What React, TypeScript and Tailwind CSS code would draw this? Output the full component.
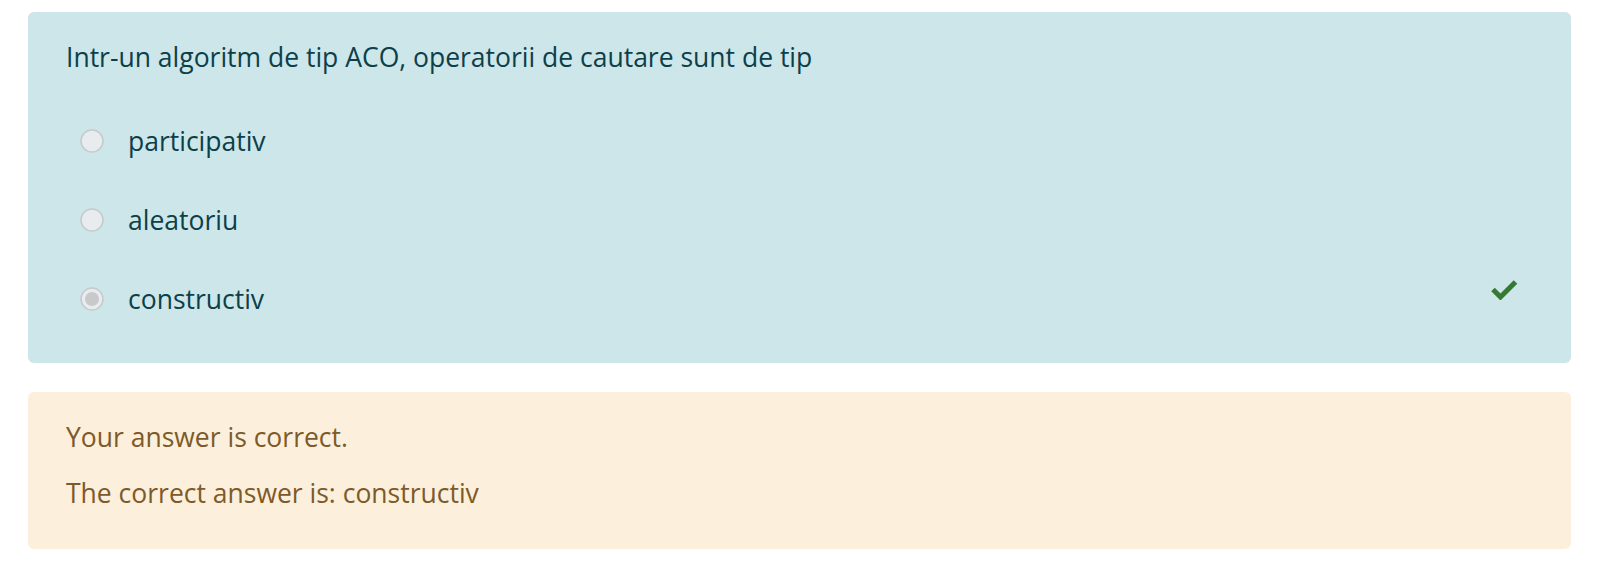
import React from "react";

function Radio({ checked }: { checked?: boolean }) {
  return (
    <svg width="24" height="24" viewBox="0 0 24 24" className="shrink-0">
      <circle cx="12" cy="12" r="11" fill="#e9ecef" stroke="#c6cacd" strokeWidth="1.5" />
      {checked && <circle cx="12" cy="12" r="7" fill="#c8c9ca" />}
    </svg>
  );
}

function Check() {
  return (
    <svg width="28" height="22" viewBox="0 0 28 22" className="shrink-0">
      <path d="M3 11.5 L10.5 19 L25.5 4" fill="none" stroke="#357a32" strokeWidth="5" strokeLinejoin="miter" />
    </svg>
  );
}

export default function App() {
  const options = [
    { label: "participativ", checked: false },
    { label: "aleatoriu", checked: false },
    { label: "constructiv", checked: true },
  ];
  return (
    <div
      className="bg-white w-[1600px] h-[579px] pt-[12px] pl-[28px] pr-[29px]"
      style={{ fontFamily: '"Open Sans", "Noto Sans", sans-serif' }}
    >
      <div className="bg-[#cde6ea] text-[#0c4049] rounded-[6px] h-[351px] pt-[28px] pl-[38px] pr-[53px]">
        <div className="h-[34px] leading-[34px] text-[26.5px]">
          Intr-un algoritm de tip ACO, operatorii de cautare sunt de tip
        </div>
        <div className="mt-[27px] flex flex-col">
          {options.map((o) => (
            <div key={o.label} className="h-[79px] flex items-center">
              <div className="pl-[14px] flex items-center">
                <Radio checked={o.checked} />
                <span className="ml-[24px] text-[26.5px] leading-[34px]">{o.label}</span>
              </div>
              {o.checked && (
                <div className="ml-auto -mt-[20px]">
                  <Check />
                </div>
              )}
            </div>
          ))}
        </div>
      </div>
      <div className="mt-[29px] bg-[#fcefdc] text-[#7d5a29] rounded-[6px] h-[157px] pt-[28px] pl-[38px]">
        <div className="h-[34px] leading-[34px] text-[26.5px]">Your answer is correct.</div>
        <div className="mt-[22px] h-[34px] leading-[34px] text-[26.5px]">
          The correct answer is: constructiv
        </div>
      </div>
    </div>
  );
}
